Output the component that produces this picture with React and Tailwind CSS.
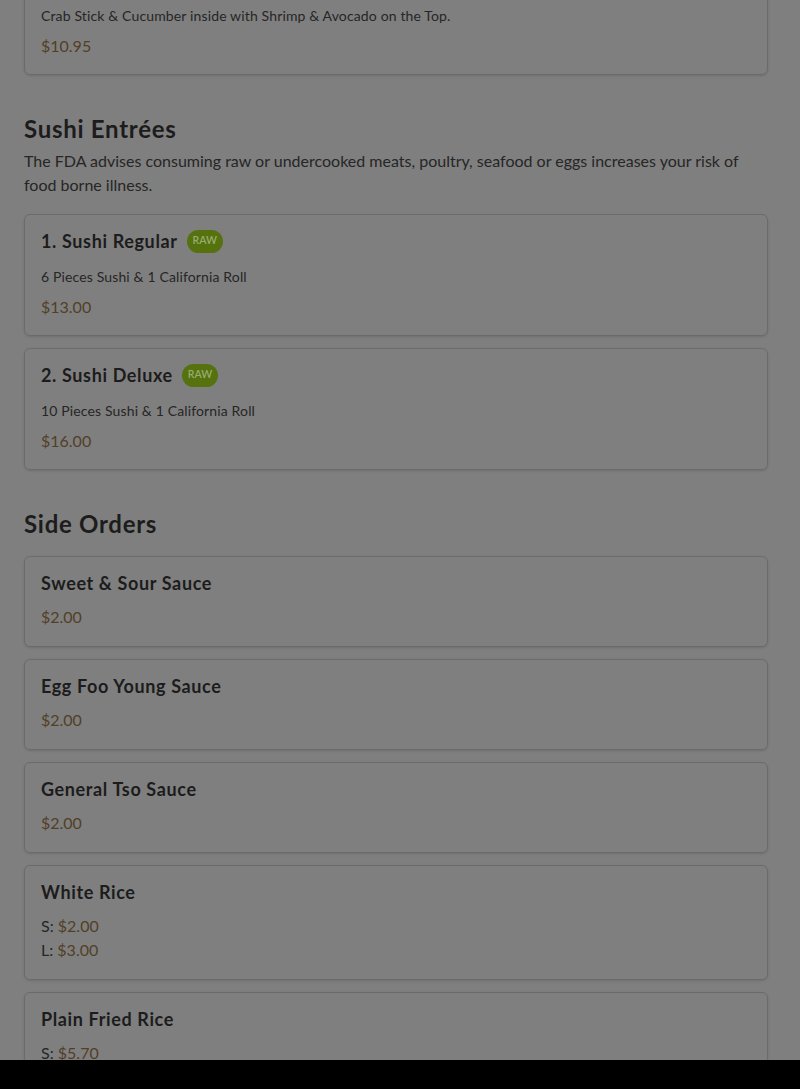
import React from 'react';

const sushi = [
  { name: '1. Sushi Regular', desc: '6 Pieces Sushi & 1 California Roll', price: '$13.00' },
  { name: '2. Sushi Deluxe', desc: '10 Pieces Sushi & 1 California Roll', price: '$16.00' },
];

const sides = [
  { name: 'Sweet & Sour Sauce', prices: [{ price: '$2.00' }] },
  { name: 'Egg Foo Young Sauce', prices: [{ price: '$2.00' }] },
  { name: 'General Tso Sauce', prices: [{ price: '$2.00' }] },
  { name: 'White Rice', prices: [{ size: 'S', price: '$2.00' }, { size: 'L', price: '$3.00' }] },
  { name: 'Plain Fried Rice', prices: [{ size: 'S', price: '$5.70' }, { size: 'L', price: '$8.50' }] },
];

const Badge = () => (
  <span className="inline-flex items-center h-[23px] px-[6px] rounded-full bg-[#55720f] text-[#98ac6e] text-[10.5px] font-semibold uppercase shrink-0">
    Raw
  </span>
);

const Card = ({ children, className = '' }) => (
  <div className={`border border-[#6b6b6b] rounded-md px-4 pt-4 shadow-sm ${className}`}>{children}</div>
);

const App = () => {
  return (
    <div className="h-screen bg-[#7f7f7f] text-[#1c1c1c] pl-6 pr-8 overflow-hidden" style={{ fontFamily: 'Lato, "Noto Sans", sans-serif' }}>
      <Card className="-mt-[11px] pb-4">
        <p className="text-sm leading-5 tracking-[0.01em] text-[#262626]">Crab Stick &amp; Cucumber inside with Shrimp &amp; Avocado on the Top.</p>
        <p className="mt-2 text-base leading-6 text-[#524026]">$10.95</p>
      </Card>

      <section className="mt-[38px]">
        <h2 className="text-2xl leading-8 font-bold tracking-[0.03em]">Sushi Entrées</h2>
        <p className="mt-1 text-base leading-6 text-[#262626]">
          The FDA advises consuming raw or undercooked meats, poultry, seafood or eggs increases your risk of food borne illness.
        </p>
        <div className="mt-[17px] flex flex-col gap-3">
          {sushi.map((item) => (
            <Card key={item.name} className="pb-4">
              <div className="flex items-center gap-[9px] h-5">
                <h3 className="text-lg leading-5 font-bold tracking-[0.035em]">{item.name}</h3>
                <Badge />
              </div>
              <p className="mt-4 text-sm leading-5 tracking-[0.01em] text-[#262626]">{item.desc}</p>
              <p className="mt-2 text-base leading-6 text-[#524026]">{item.price}</p>
            </Card>
          ))}
        </div>
      </section>

      <section className="mt-[38px]">
        <h2 className="text-2xl leading-8 font-bold tracking-[0.03em]">Side Orders</h2>
        <div className="mt-4 flex flex-col gap-3">
          {sides.map((item) => (
            <Card key={item.name} className="pb-[17px]">
              <h3 className="text-lg leading-5 font-bold tracking-[0.035em]">{item.name}</h3>
              <div className="mt-3">
                {item.prices.map((p, i) => (
                  <p key={i} className="text-base leading-6 text-[#262626]">
                    {p.size && <span>{p.size}: </span>}
                    <span className="text-[#524026]">{p.price}</span>
                  </p>
                ))}
              </div>
            </Card>
          ))}
        </div>
      </section>

      <div className="fixed left-0 right-0 bottom-0 h-[29px] bg-black" />
    </div>
  );
};

export default App;
